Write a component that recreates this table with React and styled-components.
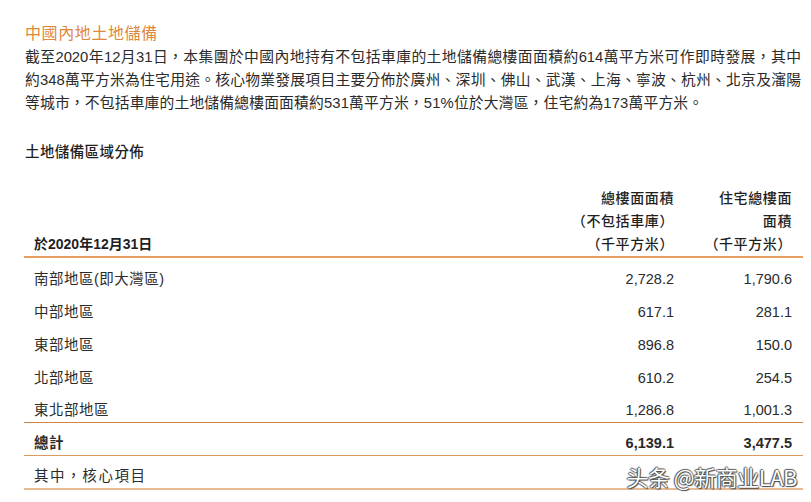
import React from 'react'
import styled, { createGlobalStyle } from 'styled-components'

const GlobalStyle = createGlobalStyle`
  body {
    margin: 0;
    background: #fff;
    font-family: "Liberation Sans", "Noto Sans CJK TC", sans-serif;
    color: #2b2b2b;
  }
`

const Page = styled.div`
  width: 811px;
  height: 502px;
  overflow: hidden;
  padding: 22px 8px 0 24px;
  box-sizing: border-box;
`
const Title = styled.h2`
  margin: 0 0 0 1px;
  font-size: 16px;
  line-height: 24px;
  font-weight: 400;
  color: #e0873a;
  letter-spacing: 0.6px;
`
const Para = styled.div`
  width: 776px;
  margin-left: 1px;
  font-size: 14.8px;
  line-height: 23px;
`
const ParaLine = styled.div`
  text-align: ${p => (p.$justify ? 'justify' : 'left')};
  text-align-last: ${p => (p.$justify ? 'justify' : 'left')};
  white-space: nowrap;
  letter-spacing: ${p => (p.$justify ? '0' : '0.15px')};
`
const SubTitle = styled.h3`
  margin: 25px 0 0 1px;
  font-size: 14.5px;
  line-height: 24px;
  font-weight: 500;
  color: #1f1f1f;
  letter-spacing: 0.4px;
`
const Table = styled.div`
  position: relative;
  margin-top: 23px;
  width: 779px;
`
const Header = styled.div`
  display: flex;
  align-items: flex-end;
  border-bottom: 2px solid #e8a062;
  font-size: 14px;
  line-height: 23px;
  font-weight: 500;
  color: #1f1f1f;
  letter-spacing: 0.6px;
`
const Row = styled.div`
  display: flex;
  align-items: flex-end;
  height: ${p => p.$h || 33}px;
  line-height: 24px;
  font-size: 14.5px;
  box-sizing: border-box;
  font-weight: ${p => (p.$bold ? 700 : 400)};
  border-bottom: ${p => p.$line || 'none'};
`
const Label = styled.div`
  flex: 1;
  padding-left: 10px;
  white-space: nowrap;
  font-weight: ${p => (p.$bold ? 700 : 'inherit')};
  letter-spacing: ${p => (p.$spaced ? '1.6px' : p.$bold ? '0' : '0.5px')};
`
const Value = styled.div`
  width: ${p => p.$w}px;
  text-align: right;
  white-space: nowrap;
`
const Tail = styled.div`
  width: 11px;
`
const Watermark = styled.div`
  position: absolute;
  right: 6px;
  bottom: 1px;
  font-family: "Noto Sans CJK SC", "Liberation Sans", sans-serif;
  font-size: 22px;
  line-height: 26px;
  color: #fff;
  letter-spacing: -0.5px;
  text-shadow: 0 0 1px #333, 1px 1px 1px #444, -1px 0 1px #555, 0 -1px 1px #666;
  white-space: nowrap;
`

const rows = [
  ['南部地區(即大灣區)', '2,728.2', '1,790.6'],
  ['中部地區', '617.1', '281.1'],
  ['東部地區', '896.8', '150.0'],
  ['北部地區', '610.2', '254.5'],
  ['東北部地區', '1,286.8', '1,001.3'],
]

export default function App() {
  return (
    <Page>
      <GlobalStyle />
      <Title>中國內地土地儲備</Title>
      <Para>
        <ParaLine $justify>截至2020年12月31日，本集團於中國內地持有不包括車庫的土地儲備總樓面面積約614萬平方米可作即時發展，其中</ParaLine>
        <ParaLine $justify>約348萬平方米為住宅用途。核心物業發展項目主要分佈於廣州、深圳、佛山、武漢、上海、寧波、杭州、北京及瀋陽</ParaLine>
        <ParaLine>等城市，不包括車庫的土地儲備總樓面面積約531萬平方米，51%位於大灣區，住宅約為173萬平方米。</ParaLine>
      </Para>
      <SubTitle>土地儲備區域分佈</SubTitle>
      <Table>
        <Header>
          <Label $bold>於2020年12月31日</Label>
          <Value $w={158}>總樓面面積<br />（不包括車庫）<br />（千平方米）</Value>
          <Value $w={118}>住宅總樓面<br />面積<br />（千平方米）</Value>
          <Tail />
        </Header>
        {rows.map((r, i) => (
          <Row key={r[0]} $line={i === rows.length - 1 ? '1px solid #cf8546' : 'none'}>
            <Label>{r[0]}</Label>
            <Value $w={158}>{r[1]}</Value>
            <Value $w={118}>{r[2]}</Value>
            <Tail />
          </Row>
        ))}
        <Row $bold $line="1px solid #dd9a60">
          <Label>總計</Label>
          <Value $w={158}>6,139.1</Value>
          <Value $w={118}>3,477.5</Value>
          <Tail />
        </Row>
        <Row $h={34} $line="2px solid #e8bb92">
          <Label $spaced>其中，核心項目</Label>
          <Value $w={158}></Value>
          <Value $w={118}></Value>
          <Tail />
        </Row>
        <Watermark>头条 @新商业LAB</Watermark>
      </Table>
    </Page>
  )
}
